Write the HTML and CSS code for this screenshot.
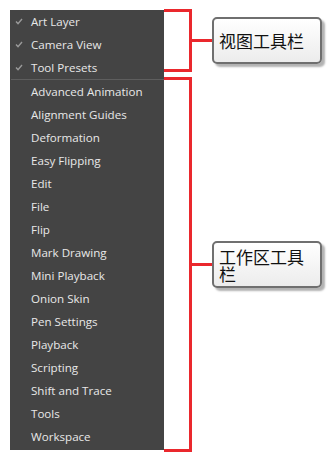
FILE: index.html
```html
<!DOCTYPE html>
<html lang="zh">
<head>
    <meta charset="UTF-8">
    <title>Toolbars menu</title>
    <link rel="stylesheet" href="styles.css">
</head>
<body>
    <div id="page">
        <div id="menu">
            <div class="item checked"><span class="check"><svg width="8" height="7" viewBox="0 0 8 7"><path d="M1 3.6 L3 5.6 L7 1" fill="none" stroke="#9a9a9a" stroke-width="1.4"/></svg></span>Art Layer</div>
            <div class="item checked"><span class="check"><svg width="8" height="7" viewBox="0 0 8 7"><path d="M1 3.6 L3 5.6 L7 1" fill="none" stroke="#9a9a9a" stroke-width="1.4"/></svg></span>Camera View</div>
            <div class="item checked"><span class="check"><svg width="8" height="7" viewBox="0 0 8 7"><path d="M1 3.6 L3 5.6 L7 1" fill="none" stroke="#9a9a9a" stroke-width="1.4"/></svg></span>Tool Presets</div>
            <div class="separator"></div>
            <div class="item">Advanced Animation</div>
            <div class="item">Alignment Guides</div>
            <div class="item">Deformation</div>
            <div class="item">Easy Flipping</div>
            <div class="item">Edit</div>
            <div class="item">File</div>
            <div class="item">Flip</div>
            <div class="item">Mark Drawing</div>
            <div class="item">Mini Playback</div>
            <div class="item">Onion Skin</div>
            <div class="item">Pen Settings</div>
            <div class="item">Playback</div>
            <div class="item">Scripting</div>
            <div class="item">Shift and Trace</div>
            <div class="item">Tools</div>
            <div class="item">Workspace</div>
        </div>
        <div id="notes">
            <div class="group view-group">
                <div class="bracket"></div>
                <div class="stub"></div>
                <div class="callout">视图工具栏</div>
            </div>
            <div class="group work-group">
                <div class="bracket"></div>
                <div class="stub"></div>
                <div class="callout">工作区工具栏</div>
            </div>
        </div>
    </div>
</body>
</html>
```

FILE: styles.css
```css
body {
    margin: 0;
    background-color: #fff;
}
#page {
    display: flex;
    align-items: flex-start;
    padding: 10px 0 0 10px;
}
#menu {
    width: 154px;
    background-color: #444;
    padding-bottom: 2px;
    font-family: 'Open Sans', sans-serif;
    font-size: 11.6px;
    color: #e8e8e8;
}
.item {
    display: flex;
    align-items: center;
    height: 23px;
    padding-left: 21px;
    position: relative;
}
.check {
    position: absolute;
    left: 5px;
    top: 8px;
    display: flex;
}
.separator {
    height: 1px;
    background-color: #5e5e5e;
    margin-left: 1px;
}
#notes {
    display: flex;
    flex-direction: column;
    gap: 5px;
    margin-top: -1px;
}
.group {
    display: flex;
    align-items: center;
}
.view-group {
    height: 63px;
}
.work-group {
    height: 375px;
}
.bracket {
    box-sizing: border-box;
    width: 28px;
    height: 100%;
    border: 3px solid #ea282d;
    border-left: none;
}
.stub {
    width: 20px;
    height: 3px;
    background-color: #ea282d;
}
.callout {
    box-sizing: border-box;
    width: 110px;
    height: 47px;
    padding: 0 6px 0 5px;
    display: flex;
    align-items: center;
    border: 2px solid #6f6f6f;
    border-radius: 5px;
    background: linear-gradient(#fff, #ececec);
    box-shadow: 3px 3px 2px rgba(0, 0, 0, 0.3);
    font-family: 'Noto Sans CJK SC', sans-serif;
    font-size: 17px;
    line-height: 17px;
    color: #111;
}
```
